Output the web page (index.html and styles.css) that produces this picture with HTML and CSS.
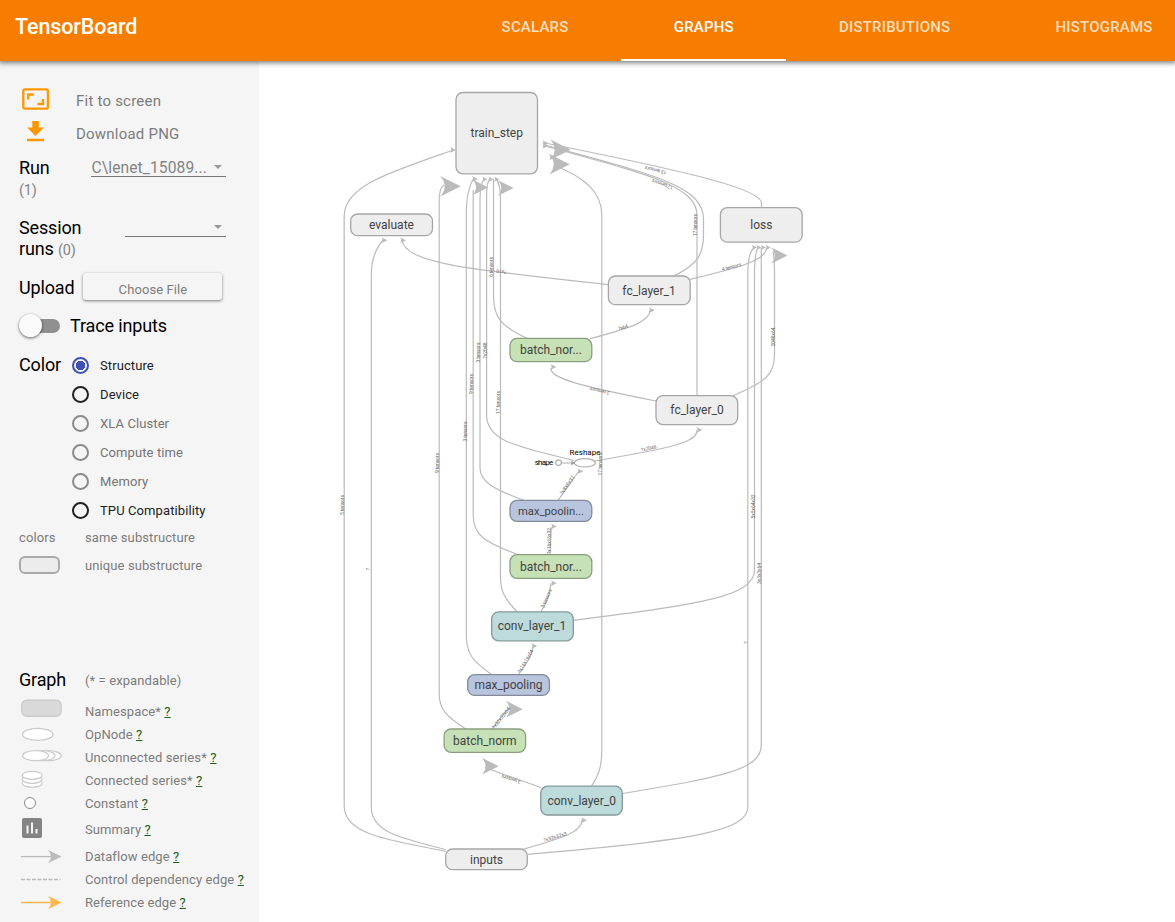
FILE: index.html
```
<!DOCTYPE html>
<html lang="en">
<head>
<meta charset="utf-8">
<title>TensorBoard</title>
<link rel="stylesheet" href="styles.css">
</head>
<body>
<header class="toolbar">
  <h1 class="brand">TensorBoard</h1>
  <nav class="tabs">
    <span class="tab">SCALARS</span>
    <span class="tab tab-active">GRAPHS</span>
    <span class="tab">DISTRIBUTIONS</span>
    <span class="tab">HISTOGRAMS</span>
  </nav>
</header>
<main class="content">
  <aside class="sidebar">
    <div class="action">
      <svg class="action-icon" width="28" height="24" viewBox="0 0 28 24"><rect x="1.3" y="2.3" width="24.6" height="19.4" rx="1.8" fill="none" stroke="#ff9800" stroke-width="2.3"/><path d="M6.200 12.500V7.500h5.500M21 12V17H15.500" fill="none" stroke="#ff9800" stroke-width="2.300"/></svg>
      <span>Fit to screen</span>
    </div>
    <div class="action">
      <svg class="action-icon" width="28" height="24" viewBox="0 0 28 24"><path d="M10.300 1h6.500v6.500h5L13.500 16 5.100 7.500h5.200zM5.100 18.700h17v2.600h-17z" fill="#ff9800"/></svg>
      <span>Download PNG</span>
    </div>
    <div class="field run">
      <div class="title">Run<span class="count block">(1)</span></div>
      <div class="select select-run"><span>C\lenet_15089...</span><i class="caret"></i></div>
    </div>
    <div class="field session">
      <div class="title">Session<br>runs <span class="count">(0)</span></div>
      <div class="select select-session"><i class="caret"></i></div>
    </div>
    <div class="field upload"><span class="title">Upload</span><span class="button">Choose File</span></div>
    <div class="field trace"><span class="toggle"><i class="knob"></i></span><span class="title">Trace inputs</span></div>
    <div class="color">
      <span class="title">Color</span>
      <div class="radios">
        <span class="radio selected"><i class="ring"></i>Structure</span>
        <span class="radio"><i class="ring"></i>Device</span>
        <span class="radio disabled"><i class="ring"></i>XLA Cluster</span>
        <span class="radio disabled"><i class="ring"></i>Compute time</span>
        <span class="radio disabled"><i class="ring"></i>Memory</span>
        <span class="radio"><i class="ring"></i>TPU Compatibility</span>
      </div>
    </div>
    <div class="key"><span class="key-icon">colors</span><span>same substructure</span></div>
    <div class="key"><span class="key-icon"><i class="swatch"></i></span><span>unique substructure</span></div>
    <div class="legend-head"><span class="title">Graph</span><span>(* = expandable)</span></div>
    <div class="legend">
      <svg class="legend-icon" width="44" height="20" viewBox="19 701 44 20"><rect x="21.700" y="700.300" width="39.500" height="16" rx="5" fill="#d9d9d9" stroke="#ccc" stroke-width="1.400"/></svg><span>Namespace* <a class="help">?</a></span>
      <svg class="legend-icon" width="44" height="20" viewBox="19 724 44 20"><ellipse cx="37.800" cy="734.400" rx="15.200" ry="6" fill="#fff" stroke="#ccc" stroke-width="1.400"/></svg><span>OpNode <a class="help">?</a></span>
      <svg class="legend-icon" width="44" height="20" viewBox="19 747 44 20"><g fill="#fff" stroke="#ccc" stroke-width="1.200"><ellipse cx="48.300" cy="755.700" rx="13" ry="5"/><ellipse cx="42" cy="755.700" rx="13" ry="5"/><ellipse cx="35.600" cy="755.700" rx="13" ry="5"/></g></svg><span>Unconnected series* <a class="help">?</a></span>
      <svg class="legend-icon" width="44" height="20" viewBox="19 770 44 20"><g fill="#fff" stroke="#ccc" stroke-width="1.200"><ellipse cx="32.200" cy="783.300" rx="10" ry="4"/><ellipse cx="32.200" cy="779.300" rx="10" ry="4"/><ellipse cx="32.200" cy="775.300" rx="10" ry="4"/></g></svg><span>Connected series* <a class="help">?</a></span>
      <svg class="legend-icon" width="44" height="20" viewBox="19 793 44 20"><circle cx="30" cy="803" r="5.500" fill="#fff" stroke="#888"/></svg><span>Constant <a class="help">?</a></span>
      <svg class="legend-icon" width="44" height="24" viewBox="19 817 44 24"><rect x="22" y="818" width="20" height="20" rx="2" fill="#848484"/><path d="M27.500 825.500v8M32 822.500v11M36.500 829v4.500" stroke="#f5f5f5" stroke-width="2"/></svg><span>Summary <a class="help">?</a></span>
      <svg class="legend-icon" width="44" height="20" viewBox="19 846 44 20"><path d="M21 856.600h32" stroke="#bbb" stroke-width="1.300"/><path d="M48 850l13.500 6.600L48 863.200q6-6.600 0-13.200z" fill="#bbb"/></svg><span>Dataflow edge <a class="help">?</a></span>
      <svg class="legend-icon" width="44" height="20" viewBox="19 869 44 20"><path d="M21 879.500h39.500" stroke="#bbb" stroke-width="1.300" stroke-dasharray="4 1.500"/></svg><span>Control dependency edge <a class="help">?</a></span>
      <svg class="legend-icon" width="44" height="20" viewBox="19 892 44 20"><path d="M21 902.500h32" stroke="#ffb74d" stroke-width="1.500"/><path d="M48 896l13.500 6.600L48 909.200q6-6.600 0-13.200z" fill="#ffb74d"/></svg><span>Reference edge <a class="help">?</a></span>
    </div>
  </aside>
  <svg class="graph" width="916" height="861" viewBox="259 61 916 861">
    <defs><symbol id="arrow" viewBox="0 0 10 10"><path d="M0 0L10 5L0 10C3 7 3 3 0 0Z"/></symbol></defs>
    <g class="edges">
      <path d="M445.700 851.300C390 840 344.200 835 344.200 806V216C344.200 186 390 172 452 150.500"/>
      <path d="M445.700 849.500C400 838 371.300 832 371.300 807V275C371.300 258 377 247 383 240"/>
      <path d="M466 729C445 716 439.200 708 439.200 694V200C439.200 190 441 187 444 185"/>
      <path d="M492 674.700C472 661 466.300 653 466.300 635V215C466.300 195 470 184 474 178"/>
      <path d="M518 554.700C485 542 473.200 536 473.200 515V190"/>
      <path d="M524 500.300C495 490 480 482 480 468V200C480 190 481 183 484 179"/>
      <path d="M574 460.500C520 447 486.600 442 486.600 415V195C486.600 187 487 182 490 179"/>
      <path d="M527 338.300C500 326 493.500 316 493.500 296V179"/>
      <path d="M517 611.700C503 597 500.500 590 500.500 577V200C500.500 190 499 182 496 179"/>
      <path d="M591.500 786C599 775 601.800 766 601.800 750V215C601.800 192 585 178 556 166"/>
      <path d="M697 395.700V215C697 185 642 173 545 146"/>
      <path d="M674 276C698 264 703.500 254 703.500 235V219C703.500 185 650 174 545 145"/>
      <path d="M761.500 207.700V203C761.500 190 700 174 545 143"/>
      <path d="M608.300 284.700C475 270 405 264 402 240"/>
      <path d="M690 279.300C747 266 766 259 766.500 248"/>
      <path d="M590 338.700C634 327 650 321 650 310"/>
      <path d="M656 401C580 386 549 378 551 368"/>
      <path d="M733 395.700C765 382 774.500 375 774.500 355V270C774.500 260 774 256 773 251"/>
      <path d="M595 461C670 448 697 443 697 430"/>
      <path d="M558 500.300L579 471"/>
      <path d="M550 554.700C550.500 545 551 535 551 527"/>
      <path d="M541 611.700C549 598 550 592 551 583"/>
      <path d="M518 674.700C530 660 533 652 533 646"/>
      <path d="M492 729C500 718 505 712 510 707"/>
      <path d="M540.700 787.500C515 778 495 772 485 767"/>
      <path d="M522 849.500C563 838 582 832 582 820"/>
      <path d="M527.700 854.300C700 840 747.800 830 747.800 807V275C747.800 258 750 251 754 248"/>
      <path d="M573.400 620.300C700 605 754.500 596 754.500 570V275C754.500 260 755 252 758 248"/>
      <path d="M622.500 793.500C722 777 761.300 770 761.300 745V248"/>
      <path d="M561 463H572"/>
    </g>
    <g class="arrows">
      <use href="#arrow" x="450" y="147" width="6" height="6"/>
      <use href="#arrow" x="440" y="176" width="20.700" height="20.700"/>
      <use href="#arrow" x="472.500" y="179.600" width="15.600" height="15.600"/>
      <use href="#arrow" x="497.700" y="180" width="16" height="16"/>
      <use href="#arrow" x="550" y="139.300" width="20.700" height="20.700"/>
      <use href="#arrow" x="549" y="154" width="20.700" height="20.700"/>
      <use href="#arrow" x="542" y="140" width="6.500" height="6.500"/>
      <use href="#arrow" x="542" y="142.500" width="6.500" height="6.500"/>
      <use href="#arrow" x="549" y="154" width="6" height="6"/>
      <use href="#arrow" x="472" y="176" width="6" height="6"/>
      <use href="#arrow" x="482" y="176.500" width="5.500" height="5.500"/>
      <use href="#arrow" x="488.300" y="176.500" width="5.500" height="5.500"/>
      <use href="#arrow" x="494" y="176.500" width="5.500" height="5.500"/>
      <use href="#arrow" x="381.300" y="237.300" width="6" height="6"/>
      <use href="#arrow" x="400" y="237.300" width="6" height="6"/>
      <use href="#arrow" x="751.500" y="244.700" width="5.500" height="5.500"/>
      <use href="#arrow" x="756" y="244.700" width="5.500" height="5.500"/>
      <use href="#arrow" x="760.500" y="244.700" width="5.500" height="5.500"/>
      <use href="#arrow" x="765.300" y="244.700" width="5.500" height="5.500"/>
      <use href="#arrow" x="771" y="247.300" width="16.500" height="16.500"/>
      <use href="#arrow" x="648.700" y="307.300" width="6" height="6"/>
      <use href="#arrow" x="550.300" y="364" width="6" height="6"/>
      <use href="#arrow" x="570.500" y="460.500" width="5" height="5" fill="#999"/>
      <use href="#arrow" x="577.300" y="468.300" width="6" height="6"/>
      <use href="#arrow" x="696.300" y="427" width="6" height="6"/>
      <use href="#arrow" x="550.700" y="523.500" width="6" height="6"/>
      <use href="#arrow" x="550.700" y="580.300" width="6" height="6"/>
      <use href="#arrow" x="531.300" y="643" width="6" height="6"/>
      <use href="#arrow" x="505.700" y="700.700" width="17" height="17"/>
      <use href="#arrow" x="481.700" y="757.700" width="17" height="17"/>
      <use href="#arrow" x="581" y="817.300" width="6" height="6"/>
    </g>
    <g class="edge-labels">
      <text transform="translate(344 505) rotate(-90)" textLength="20">5 tensors</text>
      <text transform="translate(439.300 463) rotate(-90)" textLength="20">9 tensors</text>
      <text transform="translate(466.500 431.500) rotate(-90)" textLength="20">3 tensors</text>
      <text transform="translate(473.300 384) rotate(-90)" textLength="20">9 tensors</text>
      <text transform="translate(480.300 352.500) rotate(-90)" textLength="20">3 tensors</text>
      <text transform="translate(487 350.500) rotate(-90)" textLength="16">?x2048</text>
      <text transform="translate(500.300 402.500) rotate(-90)" textLength="23">17 tensors</text>
      <text transform="translate(493.300 267) rotate(-90)" textLength="20">6 tensors</text>
      <text transform="translate(602.300 464) rotate(-90)" textLength="23">17 tensors</text>
      <text transform="translate(697 225) rotate(-90)" textLength="22">17 tensors</text>
      <text transform="translate(775 337) rotate(-90)" textLength="19">2048x64</text>
      <text transform="translate(754.800 506.500) rotate(-90)" textLength="24">5x5x64x32</text>
      <text transform="translate(761 573.500) rotate(-90)" textLength="21">3x3x3x64</text>
      <text transform="translate(370.300 569) rotate(-90)">?</text>
      <text transform="translate(747.800 642.500) rotate(-90)">?</text>
      <text transform="translate(551.300 541) rotate(-90)" textLength="26">?x16x16x32</text>
      <text transform="translate(501.500 270) rotate(187)" textLength="10">?x10</text>
      <text transform="translate(656 168.500) rotate(193)" textLength="22">13 tensors</text>
      <text transform="translate(663 182.700) rotate(200)" textLength="22">17 tensors</text>
      <text transform="translate(732 268.500) rotate(-15)" textLength="20">4 tensors</text>
      <text transform="translate(623.500 329) rotate(-17)" textLength="10">?x64</text>
      <text transform="translate(600 389.200) rotate(192)" textLength="20">2 tensors</text>
      <text transform="translate(649 450) rotate(-10)" textLength="16">?x2048</text>
      <text transform="translate(568.500 486) rotate(-56)" textLength="22">?x8x8x32</text>
      <text transform="translate(548 599) rotate(-67)" textLength="20">3 tensors</text>
      <text transform="translate(527 662) rotate(-60)" textLength="26">?x16x16x64</text>
      <text transform="translate(502.500 719) rotate(-52)" textLength="26">?x32x32x64</text>
      <text transform="translate(511.500 777.500) rotate(197)" textLength="20">3 tensors</text>
      <text transform="translate(555.500 838.500) rotate(-17)" textLength="24">?x32x32x3</text>
    </g>
    <g class="nodes">
      <rect class="plain" x="456" y="92.500" width="81.500" height="81.300" rx="7"/><text x="496.700" y="137">train_step</text>
      <rect class="plain" x="350.700" y="214" width="81.800" height="21.700" rx="7"/><text x="391.500" y="228.700">evaluate</text>
      <rect class="plain" x="720.400" y="207.700" width="81.800" height="34.500" rx="7"/><text x="761.300" y="229">loss</text>
      <rect class="plain" x="608.400" y="276" width="81.800" height="28.700" rx="7"/><text x="649" y="295">fc_layer_1</text>
      <rect class="green" x="510" y="338.400" width="81.800" height="23.300" rx="7"/><text x="551" y="354">batch_nor...</text>
      <rect class="plain" x="656" y="395.700" width="81.700" height="28.900" rx="7"/><text x="697" y="414">fc_layer_0</text>
      <rect class="blue" x="510" y="500.400" width="81.800" height="20.900" rx="7"/><text class="narrow" x="551" y="515">max_poolin...</text>
      <rect class="green" x="510" y="554.700" width="81.800" height="23.600" rx="7"/><text x="551" y="571">batch_nor...</text>
      <rect class="teal" x="491.700" y="611.800" width="81.600" height="29" rx="7"/><text x="532" y="630">conv_layer_1</text>
      <rect class="blue" x="467.700" y="674.700" width="81.700" height="20.700" rx="7"/><text x="508.500" y="689">max_pooling</text>
      <rect class="green" x="444.100" y="729" width="81.500" height="23.300" rx="7"/><text x="484.800" y="745">batch_norm</text>
      <rect class="teal" x="540.700" y="786.200" width="81.600" height="28.800" rx="7"/><text x="581.700" y="805">conv_layer_0</text>
      <rect class="plain" x="445.700" y="849" width="81.600" height="20.700" rx="7"/><text x="486.500" y="864">inputs</text>
      <ellipse class="op" cx="584.800" cy="462.800" rx="10.500" ry="4.200"/><circle class="op" cx="558.500" cy="462.600" r="2.800"/>
      <text class="tiny" x="585" y="455" textLength="31">Reshape</text><text class="tiny" x="544" y="465" textLength="18.500">shape</text>
    </g>
  </svg>
</main>
</body>
</html>
```
FILE: styles.css
```
* { box-sizing: border-box; }
body { margin: 0; width: 1175px; height: 922px; overflow: hidden; display: flex; flex-direction: column; background: #fff; font-family: Roboto, "Liberation Sans", sans-serif; }

.toolbar { height: 61px; flex: none; display: flex; background: #f77d00; color: #fff; padding-left: 15px; box-shadow: 0 1px 5px 1px rgba(0, 0, 0, .5); z-index: 1; }
.brand { flex: none; margin: 0; width: 434px; font-size: 21.500px; letter-spacing: -.1px; line-height: 53px; font-weight: 500; }
.tabs { display: flex; flex: none; }
.tab { padding: 0 52.600px; height: 61px; line-height: 55px; font-size: 15px; letter-spacing: .2px; font-weight: 500; color: rgba(255, 255, 255, .75); white-space: nowrap; }
.tab:last-child { padding-right: 22px; }
.tab-active { color: #fff; border-bottom: 2px solid #fff; }

.content { display: flex; flex: 1; min-height: 0; }
.sidebar { width: 259px; flex: none; height: 861px; padding: 23px 0 0 19px; background: #f5f5f5; color: #7c7c7c; font-size: 13px; letter-spacing: .1px; }
.graph { flex: none; display: block; }
.title { color: #000; font-size: 18px; line-height: 22px; letter-spacing: -.15px; }

.action { display: flex; align-items: center; height: 33px; font-size: 15px; letter-spacing: .22px; padding-left: 3px; gap: 26px; }
.action-icon { display: block; margin-top: -3px; }

.field { display: flex; }
.run { height: 67px; padding-top: 7px; gap: 42px; }
.count { color: #848484; font-size: 14.500px; }
.block { display: block; line-height: 24px; }
.select { display: flex; align-items: center; justify-content: space-between; height: 20px; border-bottom: 1px solid #757575; color: #848484; font-size: 15.600px; line-height: 22px; padding-right: 4px; }
.select span { padding-top: 2px; }
.select-run { width: 135px; padding-left: 1px; margin-left: -1px; }
.caret { margin-left: auto; border: 4px solid transparent; border-top-color: #999; border-bottom: 0; }
.session { height: 53px; }
.session .title { line-height: 21px; }
.select-session { width: 101px; margin-left: 43.500px; }
.upload { height: 35px; align-items: center; gap: 9px; }
.button { width: 139px; height: 27px; margin-top: -3px; border-radius: 3px; box-shadow: 0 1px 3px rgba(0, 0, 0, .5); text-align: center; line-height: 33px; font-size: 13px; }
.trace { height: 46px; padding-bottom: 5px; align-items: center; gap: 10px; }
.toggle { width: 41px; height: 14px; padding-left: 2px; display: flex; align-items: center; border-radius: 8px; background: linear-gradient(90deg, transparent 12px, #909090 12px); }
.knob { width: 23px; height: 23px; flex: none; margin-left: -2px; border-radius: 50%; background: #fafafa; box-shadow: 0 1px 3px rgba(0, 0, 0, .6); }
.color { display: flex; height: 173px; }
.color .title { width: 53px; padding-top: 3px; }
.radio { display: flex; align-items: center; height: 29px; gap: 11px; color: #212121; }
.ring { width: 17px; height: 17px; border: 2px solid #212121; border-radius: 50%; }
.selected .ring { border-color: #3f51b5; background: radial-gradient(circle, #3f51b5 4.500px, transparent 5px); }
.disabled { color: #747474; }
.disabled .ring { border-color: #8b8b8b; }
.key { display: flex; align-items: center; height: 27.500px; }
.key-icon { width: 66px; display: flex; }
.swatch { width: 41px; height: 18px; border: 2px solid #aaa; border-radius: 6px; background: #ececec; }
.legend-head { display: flex; align-items: center; height: 26px; margin-top: 88px; }
.legend-head .title { width: 66px; }
.legend { display: grid; grid-template-columns: 66px 1fr; grid-template-rows: 23px 23px 23px 23px 23px 29px 25px 21px 25px; margin-top: 7px; align-items: center; white-space: nowrap; }
.legend-icon { display: block; overflow: visible; margin-top: -2px; }
.help { color: #1b5e20; text-decoration: underline; }

.edges path { fill: none; stroke: #bbb; stroke-width: 1.200; }
.arrows { fill: #bbb; }
.edge-labels text { font-size: 5px; fill: #666; text-anchor: middle; }
.nodes text { font-size: 12px; fill: #424242; text-anchor: middle; }
.nodes .narrow { font-size: 11.200px; }
.nodes rect { stroke-width: 1.300; }
.nodes .plain { fill: #eee; stroke: #a6a6a6; }
.nodes .green { fill: #c5e1b5; stroke: #8a9e7f; }
.nodes .blue { fill: #b9c4de; stroke: #828a9b; }
.nodes .teal { fill: #bddbdb; stroke: #849999; }
.nodes .op { fill: #fff; stroke: #b0b0b0; stroke-width: 1.200; }
.nodes .tiny { font-size: 8px; fill: #000; }
```
